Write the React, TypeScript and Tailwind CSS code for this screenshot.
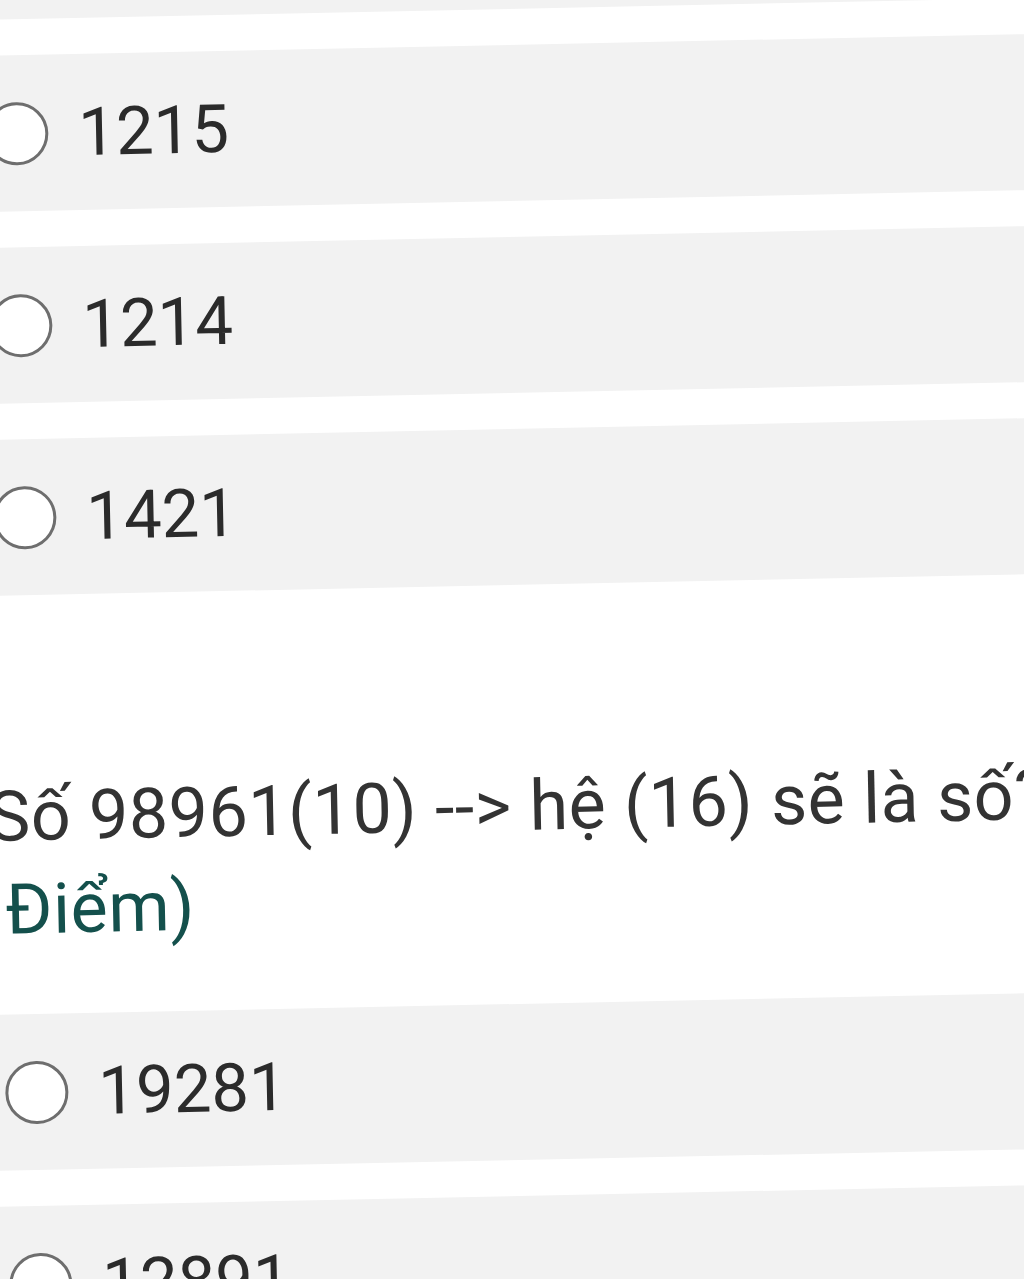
const options = ["1215", "1214", "1421"];
const nextOptions = ["19281", "12891"];

function Option({ label }: { label: string }) {
  return (
    <div className="mt-[36px] flex h-[156px] items-center bg-[#f2f2f2] pl-[60px]">
      <div className="-ml-[4px] h-[63px] w-[63px] shrink-0 rounded-full border-[3px] border-[#6e6e6e] bg-white" />
      <span className="ml-[30px] text-[67px] leading-none text-[#2b2b2b]">{label}</span>
    </div>
  );
}

export default function App() {
  return (
    <div className="relative h-[1279px] w-[1024px] overflow-hidden bg-white font-['Roboto',sans-serif]">
      {/* the photo is tilted a little, so the whole sheet is rotated */}
      <div className="-mx-[60px] -mt-[60px] h-[1399px] rotate-[-1.2deg]">
        <div className="h-[69px] bg-[#f2f2f2]" />

        {options.map((o) => (
          <Option key={o} label={o} />
        ))}

        <div className="mt-[175px] pl-[60px] text-[70px] leading-[93px] tracking-[0.5px] text-[#333333]">
          <div className="-ml-[15px] whitespace-nowrap">
            Số 98961(10) --&gt; hệ (16) sẽ là số? <span className="text-[#14504c]">(1</span>
          </div>
          <div className="whitespace-nowrap text-[#14504c]">Điểm)</div>
        </div>

        {/* margin collapses with the first option's mt-[36px] */}
        <div className="mt-[58px]">
          {nextOptions.map((o) => (
            <Option key={o} label={o} />
          ))}
        </div>
      </div>
    </div>
  );
}
